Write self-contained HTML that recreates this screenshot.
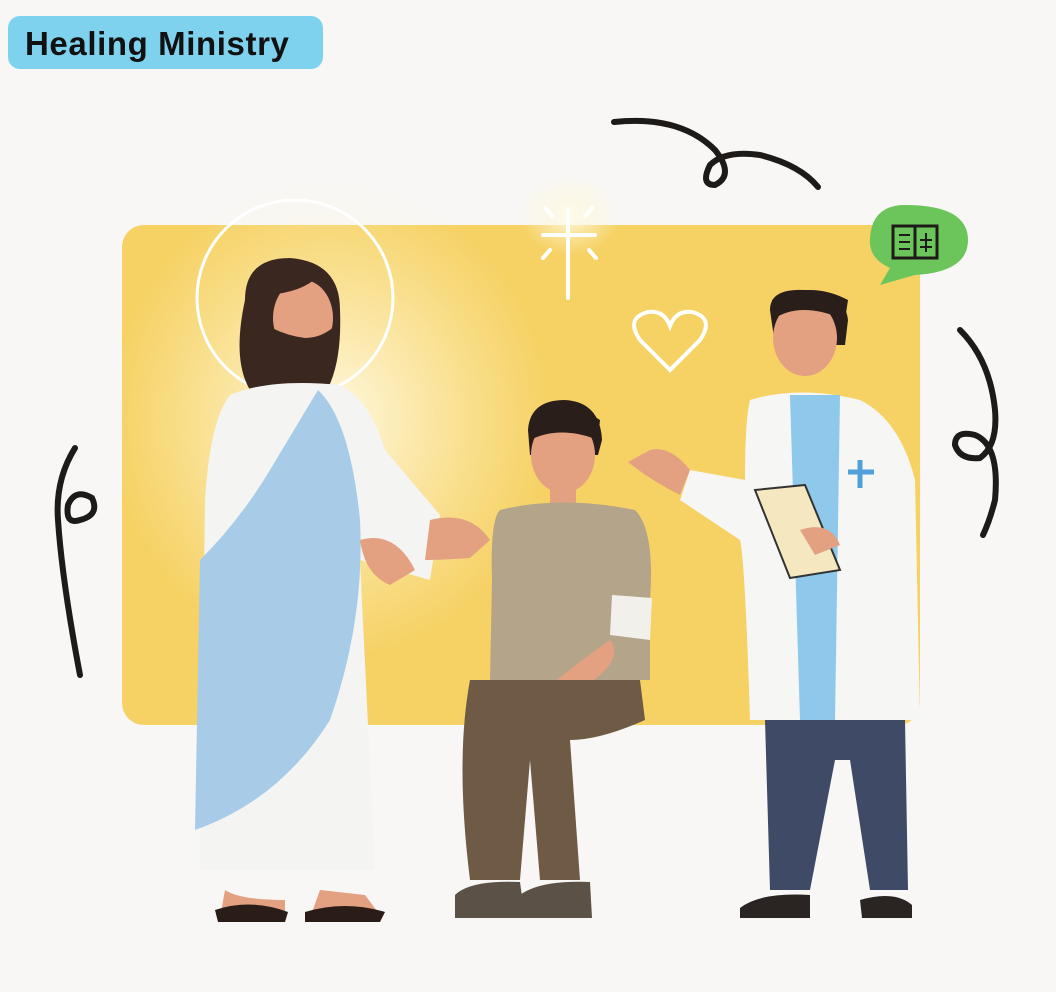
<!DOCTYPE html>
<html><head><meta charset="utf-8"><style>
html,body{margin:0;padding:0;background:#f8f7f5;}
.wrap{position:relative;width:1056px;height:992px;overflow:hidden;background:#f8f7f5;}
.badge{position:absolute;left:8px;top:16px;width:315px;height:53px;background:#7fd2ee;border-radius:12px;font-family:"Liberation Sans",sans-serif;font-weight:bold;font-size:33px;letter-spacing:0.6px;color:#111;line-height:55px;padding-left:17px;box-sizing:border-box;white-space:nowrap;}
svg{position:absolute;left:0;top:0;}
</style></head><body><div class="wrap">
<svg width="1056" height="992" viewBox="0 0 1056 992">
<defs>
<radialGradient id="glow" cx="0.5" cy="0.5" r="0.5"><stop offset="0" stop-color="#fffbe8" stop-opacity="0.95"/><stop offset="1" stop-color="#fff5d0" stop-opacity="0"/></radialGradient>
</defs>
<rect x="122" y="225" width="798" height="500" rx="22" fill="#f6d265"/>
<ellipse cx="330" cy="420" rx="220" ry="240" fill="url(#glow)"/>
<ellipse cx="570" cy="215" rx="50" ry="40" fill="url(#glow)"/>
<g fill="none" stroke="#1e1a18" stroke-width="6" stroke-linecap="round">
<path d="M614 122 Q680 115 715 150 Q735 175 715 185 Q700 185 710 165 Q725 150 760 155 Q800 165 818 187"/>
<path d="M75 448 Q55 480 58 520 Q62 580 80 675 M80 520 Q65 525 68 505 Q75 488 92 498 Q100 515 80 520"/>
<path d="M960 330 Q990 360 995 410 Q998 445 980 458 Q960 460 955 445 Q955 430 975 435 Q1000 445 995 500 Q990 520 983 535"/>
</g>
<g stroke="#fff" stroke-width="4" stroke-linecap="round"><path d="M568 210 V298 M543 235 H595 M545 208 L552 216 M592 208 L585 216 M543 258 L550 250 M596 258 L589 250"/></g>
<path d="M670 370 L640 340 Q625 318 648 312 Q664 310 670 326 Q676 310 692 312 Q715 318 700 340 Z" fill="none" stroke="#fff" stroke-width="4"/>
<path d="M905 205 Q968 205 968 240 Q968 272 915 275 L880 285 L890 268 Q868 258 870 238 Q872 205 905 205Z" fill="#6cc55a"/>
<rect x="893" y="226" width="44" height="32" fill="none" stroke="#1e1a18" stroke-width="3"/>
<line x1="915" y1="226" x2="915" y2="258" stroke="#1e1a18" stroke-width="3"/>
<g stroke="#1e1a18" stroke-width="2"><path d="M899 235 H910 M899 242 H910 M899 249 H910 M920 240 H932 M926 233 V252 M920 247 H932"/></g>
<!-- Jesus -->
<circle cx="295" cy="298" r="98" fill="none" stroke="#fff" stroke-width="3"/>
<path d="M245 300 Q245 258 290 258 Q340 262 340 310 Q342 360 328 388 L250 390 Q232 360 245 300Z" fill="#3a2720"/>
<ellipse cx="303" cy="318" rx="30" ry="38" fill="#e3a182"/>
<path d="M272 328 Q278 372 305 375 Q335 370 336 325 Q322 338 305 338 Q288 336 272 328Z" fill="#3a2720"/>
<path d="M262 282 Q285 262 322 272 Q308 290 276 294Z" fill="#3a2720"/>
<path d="M230 395 Q270 378 340 385 Q370 400 385 450 L440 515 L430 580 L360 560 L375 870 L200 870 L205 500 Q210 420 230 395Z" fill="#f4f4f2"/>
<path d="M318 390 Q350 420 360 520 Q365 620 330 720 Q280 800 195 830 L200 560 Q240 520 270 470 Q300 420 318 390Z" fill="#a8cbe8"/>
<path d="M430 520 Q470 510 490 540 L470 558 Q440 560 425 560Z" fill="#e3a182"/>
<path d="M360 540 Q395 530 415 570 L390 585 Q365 575 360 540Z" fill="#e3a182"/>
<path d="M225 890 Q240 900 285 900 L285 920 L220 918Z" fill="#e3a182"/>
<path d="M320 890 L365 895 L380 915 L310 918Z" fill="#e3a182"/>
<path d="M215 910 Q250 898 288 912 L285 922 L218 922Z M305 912 Q345 900 385 912 L380 922 L305 922Z" fill="#2a1c16"/>
<!-- Patient -->
<path d="M528 430 Q530 400 565 400 Q600 402 602 440 L598 455 L530 455Z" fill="#2a1e1a"/>
<ellipse cx="563" cy="455" rx="32" ry="38" fill="#e3a182"/>
<path d="M530 440 Q560 425 598 440 L600 420 Q570 400 530 420Z" fill="#2a1e1a"/>
<rect x="550" y="485" width="26" height="25" fill="#e3a182"/>
<path d="M500 510 Q560 495 635 510 Q655 530 650 600 L650 680 L490 680 L492 580 Q490 520 500 510Z" fill="#b3a48a"/>
<path d="M612 595 L652 598 L650 640 L610 635Z" fill="#f2f0ea"/>
<path d="M610 640 Q630 665 560 700 L535 700 Q560 675 610 640Z" fill="#e3a182"/>
<path d="M470 680 L640 680 L645 720 Q600 740 570 740 L580 880 L540 880 L530 760 L520 880 L470 880 Q455 760 470 680Z" fill="#6f5a45"/>
<path d="M455 895 Q470 880 520 882 L525 918 L455 918Z M520 895 Q540 880 590 882 L592 918 L520 918Z" fill="#5b5147"/>
<!-- Doctor -->
<path d="M770 310 Q770 288 805 290 Q845 292 848 320 L845 345 L775 345Z" fill="#2a1e1a"/>
<ellipse cx="805" cy="338" rx="32" ry="38" fill="#e3a182"/>
<path d="M772 320 Q800 300 845 320 L848 300 Q810 280 772 300Z" fill="#2a1e1a"/>
<path d="M750 400 Q800 385 860 400 Q900 420 915 480 L920 720 L750 720 Q745 560 740 540 L680 500 L690 470 L745 480 Q745 420 750 400Z" fill="#f6f6f4"/>
<path d="M790 395 L840 395 L835 720 L800 720Z" fill="#8ec8ea"/>
<path d="M650 450 Q670 445 690 470 L680 495 Q650 480 628 462Z" fill="#e3a182"/>
<path d="M755 490 L805 485 L840 570 L790 578Z" fill="#f5e7c0" stroke="#333" stroke-width="2"/>
<path d="M800 530 Q830 520 840 545 L815 555Z" fill="#e3a182"/>
<path d="M860 460 V488 M848 472 H874" stroke="#4fa0d8" stroke-width="5"/>
<path d="M765 720 L905 720 L908 890 L870 890 L850 760 L835 760 L810 890 L770 890Z" fill="#3f4a66"/>
<path d="M740 908 Q760 892 810 895 L810 918 L740 918Z M860 900 Q895 890 912 905 L912 918 L862 918Z" fill="#2a2522"/>
</svg>
<div class="badge">Healing Ministry</div>
</div></body></html>
